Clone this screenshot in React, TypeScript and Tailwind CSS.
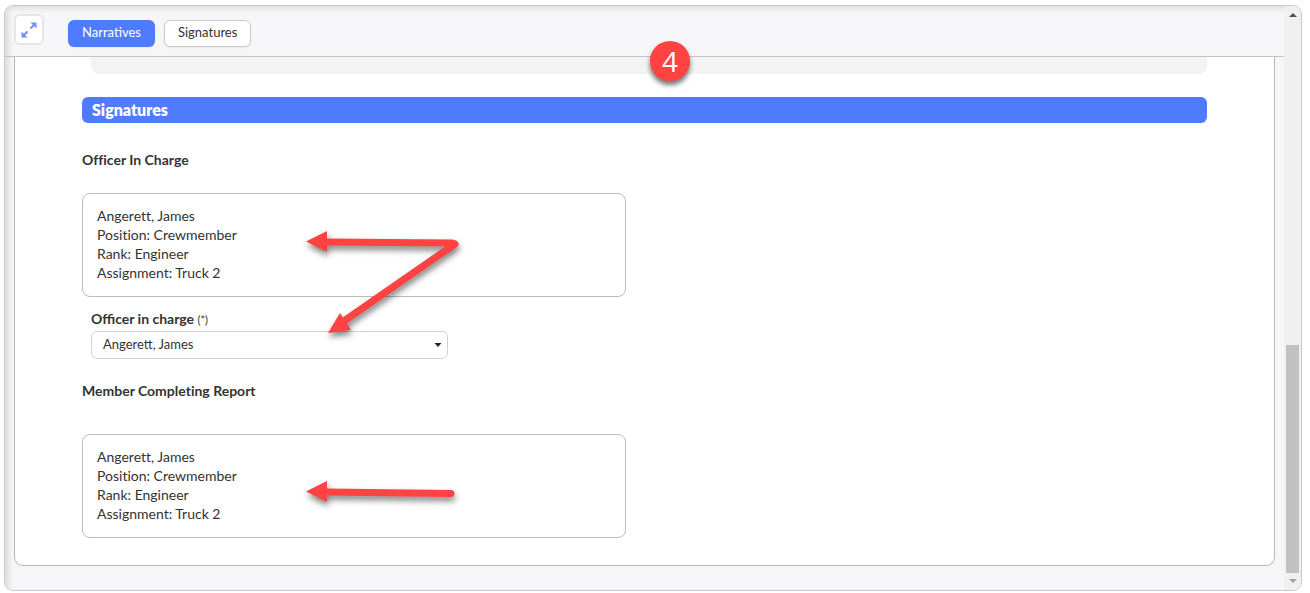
import type { ReactNode } from "react";

const person = ["Angerett, James", "Position: Crewmember", "Rank: Engineer", "Assignment: Truck 2"];

function SignatureCard({ children }: { children?: ReactNode }) {
  return (
    <div className="relative max-w-[544px] rounded-lg border border-[#bcbcbc] pt-3 pb-3.5 pl-3.5 text-[14px] leading-[19px] [font-variant-ligatures:none]">
      {person.map((line) => (
        <p key={line}>{line}</p>
      ))}
      {children}
    </div>
  );
}

export default function App() {
  return (
    <div className="bg-white font-['Lato',sans-serif] text-[#333] pt-[5px] pr-2 pl-1 pb-0.5">
      <div className="relative flex overflow-hidden rounded-[9px] border border-[#c9c9cc] bg-[#f6f6f9]">
        <div className="min-w-0 flex-1 shadow-[inset_5px_4px_5px_-1px_#dedee0]">
          <header className="flex h-[51px] items-start border-b border-[#c4c4c6] pt-2 pl-[9px]">
            <button
              aria-label="Expand"
              className="mr-6 flex h-[31px] w-[30px] items-center justify-center rounded-md border-2 border-[#e6e6ea] bg-white"
            >
              <svg width="16" height="16" viewBox="0 0 16 16" className="shrink-0 fill-[#6f90f5] stroke-[#6f90f5]">
                <path d="M9.500 6.500 13 3M3 13l3.500-3.500" strokeWidth="2" fill="none" />
                <path d="M9.500 0.500h6v6zM0.500 9.500v6h6z" stroke="none" />
              </svg>
            </button>
            <nav className="flex gap-[9px] pt-1.5 text-[13px] leading-[18px]">
              <button className="h-[27px] rounded-md bg-[#4f7cff] px-3.5 pb-1 text-white shadow-xs">Narratives</button>
              <button className="h-[27px] rounded-md border border-[#c9c9c9] bg-white px-[13px] pb-1 shadow-xs">Signatures</button>
            </nav>
          </header>

          <main className="mr-[9px] mb-6 ml-[9px] rounded-b-[9px] border border-t-0 border-[#b8b8ba] bg-white px-[67px] pb-[27px]">
            <div className="ml-[9px] h-[17px] rounded-b-lg bg-[#f3f3f3]" />
            <h2 className="mt-[23px] rounded-md bg-[#4f7cff] pl-2.5 text-[16px] leading-[26px] font-extrabold text-white">
              Signatures
            </h2>

            <h3 className="mt-7 mb-6 text-[14px] leading-[18px] font-bold [font-variant-ligatures:none]">Officer In Charge</h3>
            <SignatureCard>
              <svg
                aria-hidden="true"
                className="pointer-events-none absolute top-[29px] left-[213px] z-10 drop-shadow-[1px_4px_3px_rgba(0,0,0,0.5)]"
                width="180"
                height="122"
                viewBox="295 223 180 122"
              >
                <g fill="none" stroke="#ff4343" strokeWidth="7" strokeLinecap="round">
                  <path d="M324 242 451 243" />
                  <path d="M454 244 343 321" />
                </g>
                <path d="M305 241.500 326 231v21zM327 333l12-20 11 17z" fill="#ff4343" />
              </svg>
            </SignatureCard>

            <div className="mt-[13px] ml-[9px] max-w-[357px]">
              <label htmlFor="officer" className="block text-[14px] leading-[18px] font-bold">
                Officer in charge <span className="text-[11px] font-normal">(*)</span>
              </label>
              <div className="relative mt-0.5">
                <select
                  id="officer"
                  className="h-7 w-full appearance-none rounded-md border border-[#d2d2d2] bg-white pb-0.5 pl-[11px] text-[13px] leading-[18px]"
                >
                  <option>Angerett, James</option>
                </select>
                <svg
                  aria-hidden="true"
                  width="8"
                  height="4"
                  viewBox="0 0 8 4"
                  className="pointer-events-none absolute top-3 right-1.5"
                >
                  <path d="M0.500 0h7L4 4z" fill="#222" />
                </svg>
              </div>
            </div>

            <h3 className="mt-[23px] mb-[34px] text-[14px] leading-[18px] font-bold [font-variant-ligatures:none]">Member Completing Report</h3>
            <SignatureCard>
              <svg
                aria-hidden="true"
                className="pointer-events-none absolute top-[44px] left-[213px] drop-shadow-[1px_4px_3px_rgba(0,0,0,0.5)]"
                width="170"
                height="40"
                viewBox="295 479 170 40"
              >
                <path d="M324 492 450 493.500" stroke="#ff4343" strokeWidth="7" strokeLinecap="round" />
                <path d="M305 491.500 326 481v21z" fill="#ff4343" />
              </svg>
            </SignatureCard>
          </main>
        </div>

        <div aria-hidden="true" className="flex w-[17px] flex-col items-center bg-[#f0f0f0] pt-[7px] pb-[7px]">
          <svg width="8" height="4" viewBox="0 0 8 4">
            <path d="M0 4h8L4 0z" fill="#505050" />
          </svg>
          <div className="flex-[328]" />
          <div className="w-[13px] flex-[228] bg-[#c1c1c1]" />
          <svg width="8" height="4" viewBox="0 0 8 4" className="mt-1.5">
            <path d="M0 0h8L4 4z" fill="#a0a0a0" />
          </svg>
        </div>

        <div className="absolute top-[35px] left-[645px] flex size-10 items-center justify-center rounded-full bg-[#ff4343] font-['Open_Sans',sans-serif] text-[28px] leading-10 text-white shadow-[0_4px_5px_rgba(0,0,0,0.55)]">
          4
        </div>
      </div>
    </div>
  );
}
